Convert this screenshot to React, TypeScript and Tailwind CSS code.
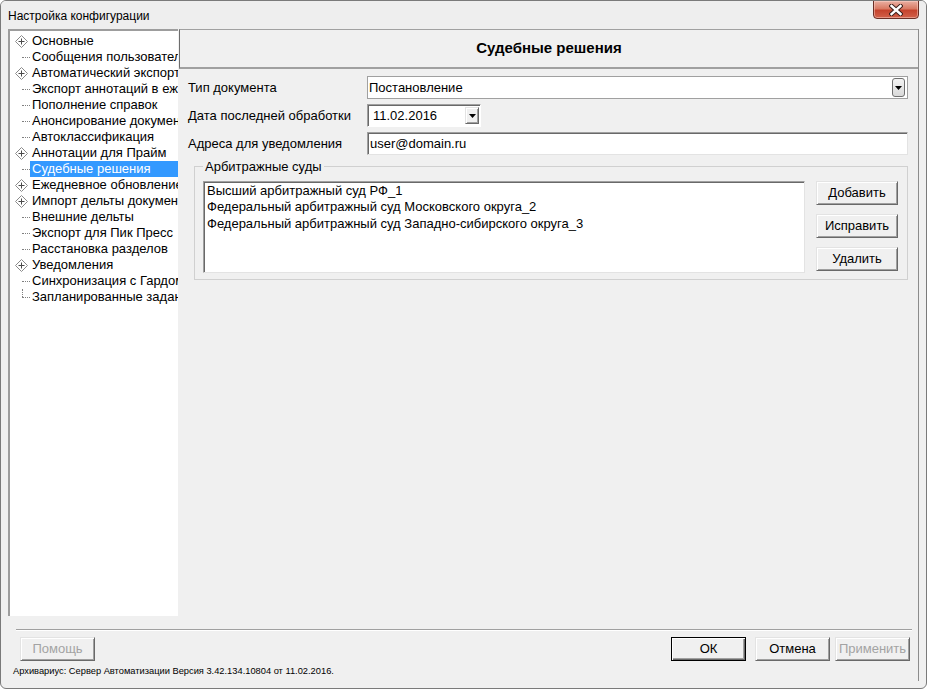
import React from 'react';

interface TreeItem {
  label: string;
  node?: boolean;
  selected?: boolean;
  last?: boolean;
}

const treeItems: TreeItem[] = [
  { label: 'Основные', node: true },
  { label: 'Сообщения пользователям' },
  { label: 'Автоматический экспорт', node: true },
  { label: 'Экспорт аннотаций в ежедневное' },
  { label: 'Пополнение справок' },
  { label: 'Анонсирование документов' },
  { label: 'Автоклассификация' },
  { label: 'Аннотации для Прайм', node: true },
  { label: 'Судебные решения', selected: true },
  { label: 'Ежедневное обновление', node: true },
  { label: 'Импорт дельты документов', node: true },
  { label: 'Внешние дельты' },
  { label: 'Экспорт для Пик Пресс' },
  { label: 'Расстановка разделов' },
  { label: 'Уведомления', node: true },
  { label: 'Синхронизация с Гардом' },
  { label: 'Запланированные задания', last: true },
];

const courts = [
  'Высший арбитражный суд РФ_1',
  'Федеральный арбитражный суд Московского округа_2',
  'Федеральный арбитражный суд Западно-сибирского округа_3',
];

// diamond "expand" glyph of the old tree control
const NodeIcon = () => (
  <svg width="13" height="13" viewBox="0 0 13 13" className="ml-[5px]">
    <polygon points="6.5,0.5 12.5,6.5 6.5,12.5 0.5,6.5" fill="#fff" stroke="#8a8a8a" />
    <path d="M3.5 6.5h6M6.5 3.5v6" stroke="#4a4a4a" />
  </svg>
);

const Arrow = () => (
  <svg width="7" height="4" viewBox="0 0 7 4">
    <polygon points="0,0 7,0 3.5,4" fill="#000" />
  </svg>
);

const Button = ({
  label,
  width = 'w-[75px]',
  disabled,
  primary,
}: {
  label: string;
  width?: string;
  disabled?: boolean;
  primary?: boolean;
}) => (
  <div
    className={
      'h-[24px] flex items-center justify-center text-[13px] bg-[#f0f0f0] ' +
      width +
      (primary
        ? ' border border-black shadow-[inset_1px_1px_0_#fff,inset_-1px_-1px_0_#696969,inset_-2px_-2px_0_#a0a0a0]'
        : ' border border-t-[#e3e3e3] border-l-[#e3e3e3] border-r-[#696969] border-b-[#696969] shadow-[inset_1px_1px_0_#fff,inset_-1px_-1px_0_#a0a0a0]') +
      (disabled ? ' text-[#a3a3a3]' : ' text-black')
    }
  >
    {label}
  </div>
);

export default function App() {
  return (
    <div className="w-[927px] h-[689px] flex flex-col bg-[#f0f0f0] border border-[#7a7a7a] rounded-[6px] overflow-hidden font-['Liberation_Sans',Arial,sans-serif] text-black">
      {/* title bar */}
      <div className="h-[28px] flex items-start justify-between pl-[7px] pr-[7px] bg-[#eeeeee]">
        <div className="text-[12px] leading-[14px] mt-[8px]">Настройка конфигурации</div>
        <div className="-mt-px w-[46px] h-[19px] flex items-center justify-center rounded-b-[4px] border border-[#6b2f26] bg-[linear-gradient(#eab0a3,#d97a64_45%,#c5432d_55%,#d2614a)] shadow-[inset_0_0_0_1px_rgba(255,220,210,0.45)]">
          <svg width="14" height="12" viewBox="0 0 14 12">
            <path d="M2.5 2 L11.5 10 M11.5 2 L2.5 10" stroke="#3b1f1b" strokeWidth="4.4" strokeLinecap="square" />
            <path d="M2.5 2 L11.5 10 M11.5 2 L2.5 10" stroke="#fff" strokeWidth="2.4" strokeLinecap="square" />
          </svg>
        </div>
      </div>

      {/* client area */}
      <div className="h-[652px] ml-[7px] mr-[7px] flex flex-col border-r border-[#8c8c8c]">
        <div className="h-[587px] flex gap-px">
          {/* tree */}
          <div className="w-[170px] h-full bg-white border-t-2 border-l-2 border-[#9d9d9d] overflow-hidden pt-[2px]">
            {treeItems.map((it) => (
              <div key={it.label} className="h-[16px] flex items-center whitespace-nowrap text-[13px] leading-[16px]">
                <div className="w-[20px] h-[16px] shrink-0 flex items-center relative">
                  {it.node ? (
                    <NodeIcon />
                  ) : (
                    <div className="ml-[12px] w-[8px] border-t border-dotted border-[#808080]" />
                  )}
                  {it.last && (
                    <div className="absolute left-[12px] top-0 h-[8px] border-l border-dotted border-[#808080]" />
                  )}
                </div>
                <div className={'px-[2px] h-[16px] ' + (it.selected ? 'bg-[#3399ff] text-white w-full' : '')}>
                  {it.label}
                </div>
              </div>
            ))}
          </div>

          {/* settings page */}
          <div className="flex-1 flex flex-col">
            <div className="h-[40px] flex items-center justify-center border-t border-b-2 border-l border-[#a0a0a0] border-l-[#6d6d6d] text-[15px] font-bold">
              Судебные решения
            </div>

            <div className="pl-[9px] pr-[10px] pt-[7px] flex flex-col text-[13px]">
              <div className="flex items-center h-[23px] mb-[5px]">
                <div className="w-[179px]">Тип документа</div>
                <div className="flex-1 h-[23px] flex items-center justify-between bg-white border border-[#a0a0a0] pl-px pr-[2px]">
                  <span>Постановление</span>
                  <div className="w-[13px] h-[19px] flex items-center justify-center rounded-[3px] border border-[#707070] bg-[linear-gradient(#f4f4f4,#d9d9d9)]">
                    <Arrow />
                  </div>
                </div>
              </div>

              <div className="flex items-center h-[23px] mb-[5px]">
                <div className="w-[179px]">Дата последней обработки</div>
                <div className="w-[114px] h-[23px] flex items-center justify-between bg-white border border-t-[#a0a0a0] border-l-[#a0a0a0] border-r-white border-b-white shadow-[inset_1px_1px_0_#696969] pl-[5px] pr-px">
                  <span>11.02.2016</span>
                  <div className="w-[14px] h-[17px] flex items-center justify-center bg-[#f0f0f0] border border-t-[#e3e3e3] border-l-[#e3e3e3] border-r-[#696969] border-b-[#696969] shadow-[inset_1px_1px_0_#fff,inset_-1px_-1px_0_#a0a0a0]">
                    <Arrow />
                  </div>
                </div>
              </div>

              <div className="flex items-center h-[23px]">
                <div className="w-[179px]">Адреса для уведомления</div>
                <div className="flex-1 h-[23px] flex items-center bg-white border border-t-[#a0a0a0] border-l-[#a0a0a0] border-r-[#e3e3e3] border-b-[#e3e3e3] shadow-[inset_1px_1px_0_#696969] pl-[2px]">
                  user@domain.ru
                </div>
              </div>

              <fieldset className="ml-[6px] mt-[4px] border border-[#d0d0d0] pl-[8px] pr-[9px] pt-[7px] pb-[6px]">
                <legend className="px-[2px] leading-[15px]">Арбитражные суды</legend>
                <div className="flex">
                  <div className="flex-1 h-[92px] bg-white border border-t-[#a0a0a0] border-l-[#a0a0a0] border-r-[#e3e3e3] border-b-[#e3e3e3] shadow-[inset_1px_1px_0_#696969] pl-[3px] pt-px leading-[16.4px]">
                    {courts.map((c) => (
                      <div key={c}>{c}</div>
                    ))}
                  </div>
                  <div className="ml-[11px] flex flex-col gap-[9px]">
                    <Button label="Добавить" width="w-[82px]" />
                    <Button label="Исправить" width="w-[82px]" />
                    <Button label="Удалить" width="w-[82px]" />
                  </div>
                </div>
              </fieldset>
            </div>
          </div>
        </div>

        {/* bottom */}
        <div className="mt-[13px] ml-[8px] mr-[6px] border-t border-[#a0a0a0] shadow-[0_1px_0_#fff]" />
        <div className="mt-[7px] flex items-center justify-between pl-[12px] pr-[8px]">
          <Button label="Помощь" disabled />
          <div className="flex">
            <Button label="ОК" primary />
            <div className="ml-[9px]">
              <Button label="Отмена" />
            </div>
            <div className="ml-[5px]">
              <Button label="Применить" disabled />
            </div>
          </div>
        </div>
        <div className="mt-[4px] pl-[5px] text-[9.3px] leading-[12px]">
          Архивариус: Сервер Автоматизации Версия 3.42.134.10804 от 11.02.2016.
        </div>
      </div>
    </div>
  );
}
